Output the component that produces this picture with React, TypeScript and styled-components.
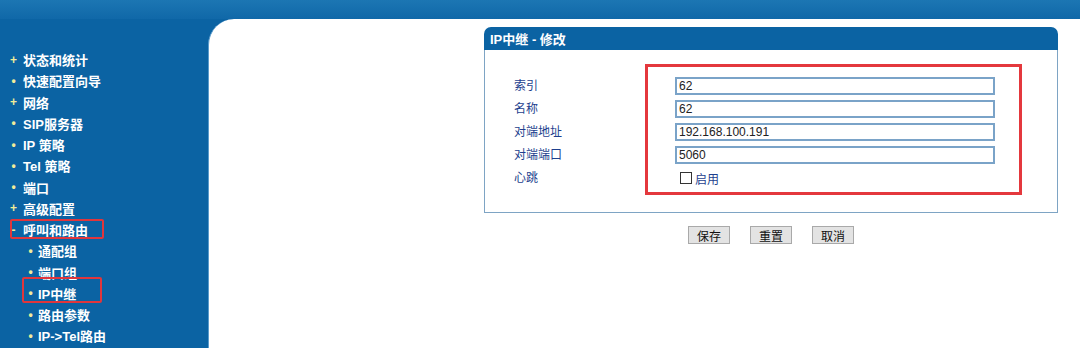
import React, { useState } from 'react';
import styled, { createGlobalStyle } from 'styled-components';

const GlobalStyle = createGlobalStyle`
  html, body {
    margin: 0;
    padding: 0;
    background: #0b63a3;
  }
  body {
    font-family: "Liberation Sans", "Noto Sans CJK SC", sans-serif;
    font-size: 12px;
  }
`;

const Page = styled.div`
  width: 1080px;
  height: 348px;
  display: flex;
  flex-direction: column;
  overflow: hidden;
  background: #0b63a3;
`;

const TopBar = styled.div`
  height: 19px;
  flex-shrink: 0;
  background: linear-gradient(to bottom, #1c76b3, #1068a8);
`;

const Main = styled.div`
  flex: 1;
  display: flex;
`;

const Sidebar = styled.nav`
  width: 208px;
  flex-shrink: 0;
  padding-top: 30px;
  display: flex;
  flex-direction: column;
`;

const MenuItem = styled.div<{ $sub?: boolean }>`
  height: 21.25px;
  flex-shrink: 0;
  display: flex;
  align-items: center;
  margin-left: ${p => (p.$sub ? '25px' : '8px')};
  color: #ffffff;
  font-weight: bold;
  font-size: 13px;
  position: relative;
`;

const Marker = styled.span<{ $sub?: boolean }>`
  width: 11px;
  color: #f1ec9a;
  font-weight: bold;
  font-size: 12px;
  text-align: center;
  margin-right: ${p => (p.$sub ? '2px' : '4px')};
`;

const RedFrame = styled.span<{ $x: number; $y: number; $w: number; $h: number }>`
  position: absolute;
  left: ${p => p.$x}px;
  top: ${p => p.$y}px;
  width: ${p => p.$w}px;
  height: ${p => p.$h}px;
  box-sizing: border-box;
  border: 2px solid #e0363c;
  border-radius: 2px;
  pointer-events: none;
`;

const Content = styled.main`
  flex: 1;
  background: #ffffff;
  border-top-left-radius: 26px;
  border-left: 1px solid #5b9ccc;
  padding: 8px 0 0 275px;
`;

const Panel = styled.section`
  width: 574px;
`;

const PanelHeader = styled.div`
  height: 23px;
  background: #0b63a3;
  border-radius: 7px 7px 0 0;
  color: #ffffff;
  font-weight: bold;
  font-size: 13px;
  display: flex;
  align-items: center;
  padding-left: 6px;
`;

const PanelBody = styled.div`
  border: 1px solid #7ea4c4;
  border-top: none;
  padding: 14px 0 17px 29px;
  display: flex;
`;

const LabelCol = styled.div`
  width: 131px;
  padding-top: 13px;
  display: flex;
  flex-direction: column;
  gap: 5px;
`;

const Label = styled.div`
  height: 18px;
  line-height: 18px;
  color: #1d3f8e;
  font-size: 12px;
`;

const Highlight = styled.div`
  border: 3px solid #e4383d;
  padding: 10px 24px 5px 27px;
  display: flex;
  flex-direction: column;
  gap: 5px;
`;

const TextInput = styled.input`
  box-sizing: border-box;
  width: 320px;
  height: 18px;
  border: 2px solid #7aa3c8;
  padding: 0 2px;
  font-family: "Liberation Sans", sans-serif;
  font-size: 12px;
  color: #222;
  outline: none;
`;

const CheckRow = styled.label`
  height: 18px;
  display: flex;
  align-items: center;
  padding-left: 5px;
  color: #1d3f8e;
  font-size: 12px;
  cursor: pointer;
`;

const Box = styled.span<{ $on: boolean }>`
  width: 10px;
  height: 10px;
  border: 1px solid #333;
  background: ${p => (p.$on ? '#1d3f8e' : '#fff')};
  margin-right: 3px;
`;

const ButtonRow = styled.div`
  width: 574px;
  margin-top: 13px;
  display: flex;
  justify-content: center;
  gap: 20px;
`;

const Button = styled.button`
  width: 42px;
  height: 18px;
  padding: 0;
  background: #e3e3e3;
  border: 1px solid #a9a9a9;
  font-family: "Liberation Sans", "Noto Sans CJK SC", sans-serif;
  font-size: 12px;
  color: #111;
  cursor: pointer;
`;

type Item = {
  label: string;
  mark: string;
  sub?: boolean;
  frame?: { x: number; y: number; w: number; h: number };
};

const menu: Item[] = [
  { label: '状态和统计', mark: '+' },
  { label: '快速配置向导', mark: '•' },
  { label: '网络', mark: '+' },
  { label: 'SIP服务器', mark: '•' },
  { label: 'IP 策略', mark: '•' },
  { label: 'Tel 策略', mark: '•' },
  { label: '端口', mark: '•' },
  { label: '高级配置', mark: '+' },
  { label: '呼叫和路由', mark: '-', frame: { x: 2, y: 0, w: 94, h: 20 } },
  { label: '通配组', mark: '•', sub: true },
  { label: '端口组', mark: '•', sub: true },
  { label: 'IP中继', mark: '•', sub: true, frame: { x: -3, y: -6, w: 80, h: 26 } },
  { label: '路由参数', mark: '•', sub: true },
  { label: 'IP->Tel路由', mark: '•', sub: true },
];

export default function App() {
  const [fields, setFields] = useState({
    index: '62',
    name: '62',
    addr: '192.168.100.191',
    port: '5060',
  });
  const [heartbeat, setHeartbeat] = useState(false);

  const update = (key: keyof typeof fields) => (e: React.ChangeEvent<HTMLInputElement>) =>
    setFields({ ...fields, [key]: e.target.value });

  return (
    <Page>
      <GlobalStyle />
      <TopBar />
      <Main>
        <Sidebar>
          {menu.map(item => (
            <MenuItem key={item.label} $sub={item.sub}>
              <Marker $sub={item.sub}>{item.mark}</Marker>
              {item.label}
              {item.frame && (
                <RedFrame $x={item.frame.x} $y={item.frame.y} $w={item.frame.w} $h={item.frame.h} />
              )}
            </MenuItem>
          ))}
        </Sidebar>
        <Content>
          <Panel>
            <PanelHeader>IP中继 - 修改</PanelHeader>
            <PanelBody>
              <LabelCol>
                <Label>索引</Label>
                <Label>名称</Label>
                <Label>对端地址</Label>
                <Label>对端端口</Label>
                <Label>心跳</Label>
              </LabelCol>
              <Highlight>
                <TextInput value={fields.index} onChange={update('index')} />
                <TextInput value={fields.name} onChange={update('name')} />
                <TextInput value={fields.addr} onChange={update('addr')} />
                <TextInput value={fields.port} onChange={update('port')} />
                <CheckRow onClick={() => setHeartbeat(!heartbeat)}>
                  <Box $on={heartbeat} />
                  启用
                </CheckRow>
              </Highlight>
            </PanelBody>
          </Panel>
          <ButtonRow>
            <Button>保存</Button>
            <Button>重置</Button>
            <Button>取消</Button>
          </ButtonRow>
        </Content>
      </Main>
    </Page>
  );
}
